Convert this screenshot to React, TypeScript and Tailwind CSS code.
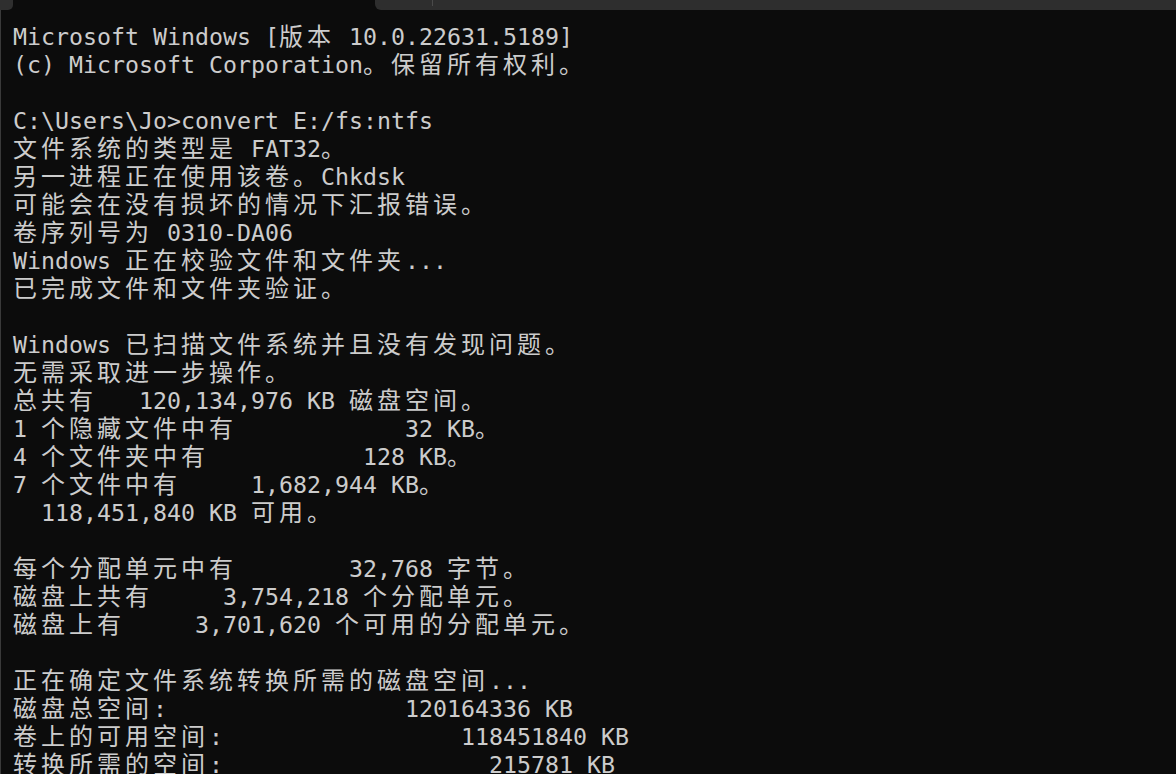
const lines: string[] = [
  "Microsoft Windows [版本 10.0.22631.5189]",
  "(c) Microsoft Corporation。保留所有权利。",
  "",
  "C:\\Users\\Jo>convert E:/fs:ntfs",
  "文件系统的类型是 FAT32。",
  "另一进程正在使用该卷。Chkdsk",
  "可能会在没有损坏的情况下汇报错误。",
  "卷序列号为 0310-DA06",
  "Windows 正在校验文件和文件夹...",
  "已完成文件和文件夹验证。",
  "",
  "Windows 已扫描文件系统并且没有发现问题。",
  "无需采取进一步操作。",
  "总共有   120,134,976 KB 磁盘空间。",
  "1 个隐藏文件中有            32 KB。",
  "4 个文件夹中有           128 KB。",
  "7 个文件中有     1,682,944 KB。",
  "  118,451,840 KB 可用。",
  "",
  "每个分配单元中有        32,768 字节。",
  "磁盘上共有     3,754,218 个分配单元。",
  "磁盘上有     3,701,620 个可用的分配单元。",
  "",
  "正在确定文件系统转换所需的磁盘空间...",
  "磁盘总空间:                 120164336 KB",
  "卷上的可用空间:                 118451840 KB",
  "转换所需的空间:                   215781 KB",
];

function isWide(ch: string) {
  const c = ch.codePointAt(0) ?? 0;
  return (c >= 0x2e80 && c <= 0x9fff) || (c >= 0xff00 && c <= 0xffef);
}

// split a line into runs of narrow / wide (two-cell) characters
function splitRuns(text: string) {
  const runs: { wide: boolean; text: string }[] = [];
  for (const ch of Array.from(text)) {
    const wide = isWide(ch);
    const last = runs[runs.length - 1];
    if (last && last.wide === wide) last.text += ch;
    else runs.push({ wide, text: ch });
  }
  return runs;
}

function TermLine({ text }: { text: string }) {
  return (
    <div className="h-[28px] whitespace-pre">
      {splitRuns(text).map((run, i) =>
        run.wide ? (
          <span key={i} className="text-[24px] leading-[28px] tracking-[4px]">
            {run.text}
          </span>
        ) : (
          <span key={i}>{run.text}</span>
        )
      )}
    </div>
  );
}

export default function App() {
  return (
    <div className="flex h-[774px] w-[1176px] flex-col overflow-hidden bg-[#0c0c0c]">
      <div className="flex h-[10px] shrink-0">
        <div className="h-full w-[13px] rounded-br-[5px] bg-[#2f2f2f]" />
        <div className="ml-auto flex h-full w-[801px] rounded-bl-[6px] bg-[#2e2e2e]">
          <div className="ml-[57px] h-[6px] w-px bg-[#4a4a4a]" />
        </div>
      </div>
      <div className="flex-1 border-l border-[#3a3a3a] pl-[12px] pt-[13px] font-['DejaVu_Sans_Mono','Noto_Sans_CJK_SC',monospace] text-[23.25px] leading-[28px] text-[#cccccc]">
        {lines.map((line, i) => (
          <TermLine key={i} text={line} />
        ))}
      </div>
    </div>
  );
}
